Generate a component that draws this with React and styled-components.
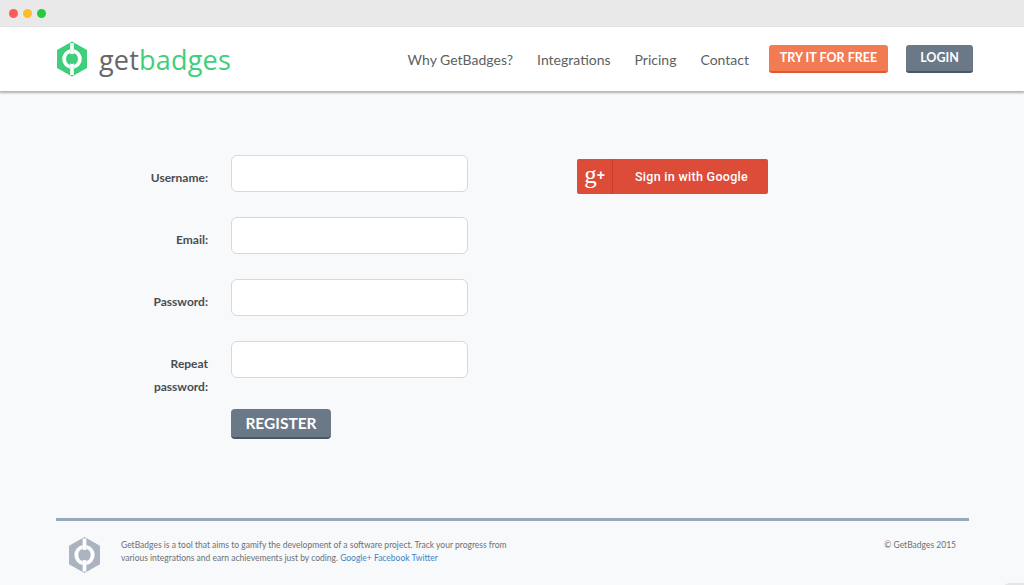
import React from "react";
import styled, { createGlobalStyle } from "styled-components";

const Global = createGlobalStyle`
  html, body { margin: 0; padding: 0; height: 100%; }
  body { background: #f7f9fb; font-family: Lato, "Liberation Sans", sans-serif; overflow: hidden; }
  * { box-sizing: border-box; }
`;

const Page = styled.div`
  width: 1024px;
  height: 585px;
  display: flex;
  flex-direction: column;
  position: relative;
  overflow: hidden;
`;

const Chrome = styled.div`
  height: 27px;
  background: #e9e9e9;
  display: flex;
  align-items: center;
  gap: 5px;
  padding-left: 9px;
  flex: none;
`;

const Dot = styled.span`
  width: 9px;
  height: 9px;
  border-radius: 50%;
  background: ${(p) => p.$c};
`;

const Header = styled.header`
  height: 65px;
  flex: none;
  background: #fff;
  border-bottom: 1px solid #b9b9b9;
  box-shadow: 0 1px 2px rgba(0, 0, 0, 0.3);
  display: flex;
  align-items: center;
  padding: 0 51px 0 56px;
  position: relative;
`;

const LogoLink = styled.div`
  display: flex;
  align-items: center;
  gap: 11px;
  margin-right: auto;
`;

const Wordmark = styled.div`
  font-family: "Open Sans", sans-serif;
  font-size: 27px;
  line-height: 32px;
  letter-spacing: 0.2px;
  color: #666769;
  padding-top: 1px;
  span { color: #3ecf7c; }
`;

const Nav = styled.nav`
  display: flex;
  align-items: center;
  gap: 24px;
  margin-right: 20px;
`;

const NavLink = styled.a`
  font-size: 14px;
  color: #5d5f62;
`;

const HeadButton = styled.button`
  height: 28px;
  margin-top: -1px;
  padding: 0;
  width: ${(p) => p.$w}px;
  margin-left: ${(p) => p.$ml || 0}px;
  border: 0;
  border-bottom: 2px solid ${(p) => p.$edge};
  border-radius: 3px;
  background: ${(p) => p.$bg};
  color: #fff;
  font-family: Lato, sans-serif;
  font-size: 12.5px;
  font-weight: 700;
`;

const Main = styled.main`
  flex: 1;
  display: flex;
  padding: 63px 0 0 0;
`;

const Form = styled.div`
  width: 577px;
  flex: none;
  display: flex;
  flex-direction: column;
`;

const Row = styled.div`
  display: grid;
  grid-template-columns: 208px 237px;
  column-gap: 23px;
  margin-bottom: 25px;
  align-items: start;
`;

const Label = styled.label`
  text-align: right;
  font-size: 12px;
  font-weight: 700;
  line-height: 23px;
  color: #4a4c4f;
  padding-top: 11px;
  margin-left: ${(p) => (p.$wrap ? 150 : 0)}px;
`;

const Input = styled.input`
  height: 37px;
  width: 237px;
  background: #fff;
  border: 1px solid #d6d8da;
  border-radius: 6px;
  display: block;
`;

const RepeatRow = styled(Row)`
  margin-bottom: 0;
  height: 68px;
`;

const Register = styled.button`
  margin-left: 231px;
  width: 100px;
  height: 30px;
  border: 0;
  border-bottom: 2px solid #4a5866;
  border-radius: 4px;
  background: #6a7888;
  color: #fff;
  font-family: Lato, sans-serif;
  font-size: 15.5px;
  font-weight: 700;
  padding: 0;
`;

const GoogleButton = styled.button`
  margin-top: 4px;
  width: 191px;
  height: 35px;
  padding: 0;
  border: 0;
  border-radius: 2px;
  background: #dd4b39;
  color: #fff;
  display: flex;
  align-items: stretch;
  font-family: Roboto, sans-serif;
  font-size: 12.5px;
  font-weight: 500;
  letter-spacing: 0.3px;
`;

const GoogleIcon = styled.span`
  width: 36px;
  flex: none;
  border-right: 1px solid #c43f2f;
  display: flex;
  align-items: center;
  justify-content: center;
  font-family: "Liberation Serif", serif;
  font-size: 25px;
  font-weight: 400;
  letter-spacing: 0;
  line-height: 1;
  padding-bottom: 5px;
  sup { font-family: "Liberation Sans", sans-serif; font-size: 14px; font-weight: 700; line-height: 1; margin-left: 0; position: relative; top: 1px; vertical-align: baseline;}
`;

const GoogleText = styled.span`
  flex: 1;
  display: flex;
  align-items: center;
  justify-content: center;
  padding-left: 2px;
  padding-bottom: 1px;
`;

const Footer = styled.footer`
  flex: none;
  height: 67px;
  margin: 0 55px 0 56px;
  border-top: 3px solid #99a8b8;
  display: flex;
  align-items: flex-start;
  padding: 15px 13px 0 12px;
`;

const FooterText = styled.p`
  margin: 3px 0 0 20px;
  width: 400px;
  font-size: 8.5px;
  line-height: 13px;
  color: #6d7073;
  a { color: #3f84c6; }
`;

const Copy = styled.div`
  margin: 3px 0 0 auto;
  font-size: 8.5px;
  line-height: 13px;
  color: #6d7073;
`;

const Corner = styled.div`
  position: absolute;
  right: 0;
  bottom: -14px;
  width: 22px;
  height: 16px;
  border-radius: 8px 0 0 0;
  background: #e4e5e6;
`;

function Mark({ w, h, c }) {
  return (
    <svg width={w} height={h} viewBox="0 0 32 36" style={{ flex: "none", display: "block" }}>
      <path d="M16 0.5 L31 9 V27 L16 35.5 L1 27 V9 Z" fill={c} />
      <path d="M14.2 8.2 A10 10 0 0 0 14.2 27.8 V24 A6.4 6.4 0 0 1 14.2 12 Z M17.8 8.2 A10 10 0 0 1 17.8 27.8 V24 A6.4 6.4 0 0 0 17.8 12 Z" fill="#fff" />
      <rect x="14.2" y="2" width="3.6" height="12" fill="#fff" />
      <rect x="14.2" y="22" width="3.6" height="12" fill="#fff" />
      <circle cx="16" cy="18" r="5" fill={c} />
    </svg>
  );
}

export default function App() {
  return (
    <Page>
      <Global />
      <Chrome>
        <Dot $c="#fc5b57" />
        <Dot $c="#fdbc2e" />
        <Dot $c="#27c93f" />
      </Chrome>
      <Header>
        <LogoLink>
          <Mark w={32} h={36} c="#3ecf7c" />
          <Wordmark>get<span>badges</span></Wordmark>
        </LogoLink>
        <Nav>
          <NavLink>Why GetBadges?</NavLink>
          <NavLink>Integrations</NavLink>
          <NavLink>Pricing</NavLink>
          <NavLink>Contact</NavLink>
        </Nav>
        <HeadButton $w={119} $bg="#f37b53" $edge="#dc5a30">TRY IT FOR FREE</HeadButton>
        <HeadButton $w={67} $ml={18} $bg="#6a7888" $edge="#4a5866">LOGIN</HeadButton>
      </Header>
      <Main>
        <Form>
          <Row><Label>Username:</Label><Input /></Row>
          <Row><Label>Email:</Label><Input /></Row>
          <Row><Label>Password:</Label><Input /></Row>
          <RepeatRow><Label $wrap>Repeat password:</Label><Input /></RepeatRow>
          <Register>REGISTER</Register>
        </Form>
        <GoogleButton>
          <GoogleIcon>g<sup>+</sup></GoogleIcon>
          <GoogleText>Sign in with Google</GoogleText>
        </GoogleButton>
      </Main>
      <Footer>
        <Mark w={33} h={38} c="#aab4c0" />
        <FooterText>
          GetBadges is a tool that aims to gamify the development of a software project. Track your progress from various integrations and earn achievements just by coding. <a>Google+</a> <a>Facebook</a> <a>Twitter</a>
        </FooterText>
        <Copy>© GetBadges 2015</Copy>
      </Footer>
      <Corner />
    </Page>
  );
}
